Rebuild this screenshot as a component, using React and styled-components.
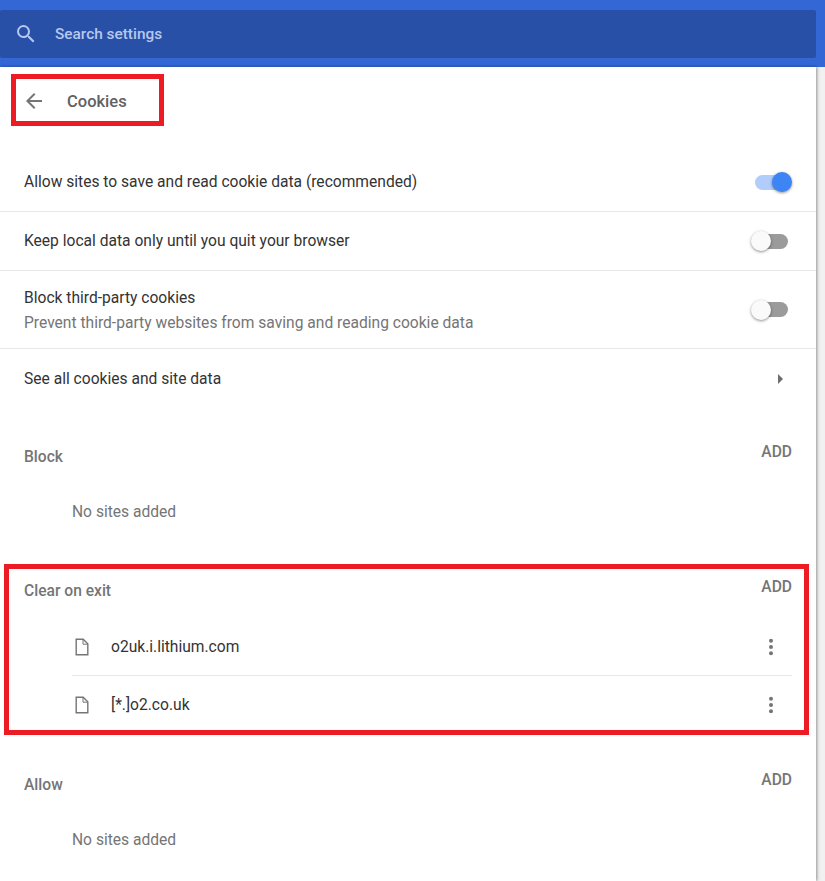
import React from 'react'
import styled, { createGlobalStyle } from 'styled-components'

const GlobalStyle = createGlobalStyle`
  html, body {
    margin: 0;
    padding: 0;
    background: #f1f1f1;
  }
  body {
    font-family: Roboto, "Liberation Sans", sans-serif;
    overflow: hidden;
  }
`

function SearchIcon() {
  return (
    <svg width="24" height="24" viewBox="0 0 24 24" fill="#b6c8ee">
      <path d="M15.5 14h-.79l-.28-.27A6.47 6.47 0 0 0 16 9.5 6.5 6.5 0 1 0 9.5 16c1.61 0 3.09-.59 4.23-1.57l.27.28v.79l5 4.99L20.49 19l-4.99-5zm-6 0C7.01 14 5 11.99 5 9.5S7.01 5 9.5 5 14 7.01 14 9.5 11.99 14 9.5 14z" />
    </svg>
  )
}

function BackIcon() {
  return (
    <svg width="24" height="24" viewBox="0 0 24 24" fill="#757575">
      <path d="M20 11H7.83l5.59-5.59L12 4l-8 8 8 8 1.41-1.41L7.83 13H20v-2z" />
    </svg>
  )
}

function FileIcon() {
  return (
    <svg width="14" height="18" viewBox="0 0 14 18" fill="none" stroke="#757575" strokeWidth="1.4">
      <path d="M1.2 1.2h7l4.6 4.6v11H1.2z" />
      <path d="M8 1.2v5h4.8" strokeWidth="1" />
    </svg>
  )
}

function MoreIcon() {
  return (
    <svg width="24" height="24" viewBox="0 0 24 24" fill="#757575">
      <circle cx="12" cy="5.8" r="2" />
      <circle cx="12" cy="12" r="2" />
      <circle cx="12" cy="18.2" r="2" />
    </svg>
  )
}

function Site({ name }) {
  return (
    <SiteRow>
      <FileSlot><FileIcon /></FileSlot>
      <SiteName>{name}</SiteName>
      <MoreSlot><MoreIcon /></MoreSlot>
    </SiteRow>
  )
}

export default function App() {
  return (
    <Page>
      <GlobalStyle />
      <Header>
        <SearchBox>
          <SearchIconSlot><SearchIcon /></SearchIconSlot>
          <SearchText>Search settings</SearchText>
        </SearchBox>
      </Header>
      <Card>
        <TitleRow>
          <BackSlot><BackIcon /></BackSlot>
          <Title>Cookies</Title>
        </TitleRow>

        <SettingRow $height={59}>
          <Label>Allow sites to save and read cookie data (recommended)</Label>
          <Toggle $on />
        </SettingRow>
        <SettingRow $height={59}>
          <Label>Keep local data only until you quit your browser</Label>
          <Toggle />
        </SettingRow>
        <SettingRow $height={78}>
          <LabelStack>
            <Label>Block third-party cookies</Label>
            <SubLabel>Prevent third-party websites from saving and reading cookie data</SubLabel>
          </LabelStack>
          <Toggle />
        </SettingRow>
        <SettingRow $height={59} $last>
          <Label>See all cookies and site data</Label>
          <Arrow />
        </SettingRow>

        <Section $top={34}>
          <SectionHead>
            <SectionTitle>Block</SectionTitle>
            <AddButton>ADD</AddButton>
          </SectionHead>
          <Empty>No sites added</Empty>
        </Section>

        <Section $top={36}>
          <SectionHead $height={40}>
            <SectionTitle $pad={4}>Clear on exit</SectionTitle>
            <AddButton>ADD</AddButton>
          </SectionHead>
          <SiteList>
            <Site name="o2uk.i.lithium.com" />
            <Site name="[*.]o2.co.uk" />
          </SiteList>
        </Section>

        <Section $top={35}>
          <SectionHead>
            <SectionTitle>Allow</SectionTitle>
            <AddButton>ADD</AddButton>
          </SectionHead>
          <Empty>No sites added</Empty>
        </Section>
      </Card>
      <TitleMark />
      <ClearMark />
    </Page>
  )
}

const Page = styled.div`
  position: relative;
  width: 825px;
  height: 881px;
  overflow: hidden;
  background: #f1f1f1;
`

const Header = styled.header`
  height: 67px;
  box-sizing: border-box;
  padding: 10px 9px 9px 0;
  background: #3367d6;
`

const SearchBox = styled.div`
  height: 48px;
  display: flex;
  align-items: center;
  background: #2850a7;
  border-radius: 2px;
`

const SearchIconSlot = styled.div`
  width: 24px;
  height: 24px;
  margin-left: 14px;
  margin-right: 17px;
`

const SearchText = styled.span`
  font-size: 15.4px;
  font-weight: 500;
  color: #b6c8ee;
`

const Card = styled.main`
  width: 816px;
  height: 814px;
  background: #fff;
  box-shadow: 1px 0 3px rgba(0, 0, 0, 0.4);
`

const TitleRow = styled.div`
  height: 86px;
  box-sizing: border-box;
  padding: 22px 0 0 22px;
  display: flex;
  align-items: flex-start;
`

const BackSlot = styled.div`
  width: 24px;
  height: 24px;
`

const Title = styled.h1`
  margin: 1px 0 0 21px;
  font-size: 16.5px;
  line-height: 24px;
  font-weight: 500;
  color: #616161;
`

const SettingRow = styled.div`
  height: ${p => p.$height}px;
  box-sizing: border-box;
  padding: 0 24px;
  display: flex;
  align-items: center;
  justify-content: space-between;
  border-bottom: ${p => (p.$last ? 'none' : '1px solid #e8e8e8')};
`

const LabelStack = styled.div`
  padding-top: 1px;
`

const Label = styled.div`
  font-size: 15.6px;
  line-height: 24px;
  color: #333;
`

const SubLabel = styled.div`
  margin-top: 1px;
  font-size: 15.6px;
  line-height: 24px;
  color: #757575;
`

const Toggle = styled.div`
  position: relative;
  flex: none;
  width: 33px;
  height: 15px;
  margin-right: 4px;
  border-radius: 8px;
  background: ${p => (p.$on ? '#b0cdfb' : '#9b9b9b')};

  &::after {
    content: '';
    position: absolute;
    top: -2.5px;
    left: ${p => (p.$on ? '17px' : '-4px')};
    width: 20px;
    height: 20px;
    border-radius: 50%;
    background: ${p => (p.$on ? '#3d84f5' : '#fafafa')};
    box-shadow: 0 1px 3px rgba(0, 0, 0, 0.45);
  }
`

const Arrow = styled.div`
  flex: none;
  width: 0;
  height: 0;
  margin-right: 9px;
  border-top: 5px solid transparent;
  border-bottom: 5px solid transparent;
  border-left: 5px solid #6e6e6e;
`

const Section = styled.section`
  margin-top: ${p => p.$top}px;
  padding: 0 24px;
`

const SectionHead = styled.div`
  height: ${p => p.$height || 41}px;
  display: flex;
  justify-content: space-between;
  align-items: flex-start;
`

const SectionTitle = styled.h2`
  margin: 0;
  padding-top: ${p => p.$pad ?? 5}px;
  font-size: 15.6px;
  line-height: 20px;
  font-weight: 500;
  color: #757575;
`

const AddButton = styled.span`
  font-size: 15.6px;
  line-height: 20px;
  font-weight: 500;
  color: #757575;
`

const Empty = styled.div`
  height: 58px;
  padding-left: 48px;
  font-size: 15.6px;
  line-height: 58px;
  color: #757575;
`

const SiteList = styled.div`
  margin-left: 48px;
`

const SiteRow = styled.div`
  height: 59px;
  box-sizing: border-box;
  display: flex;
  align-items: center;
  border-bottom: 1px solid #e8e8e8;

  &:first-child {
    padding-top: 2px;
  }

  &:last-child {
    padding-bottom: 1px;
    border-bottom: none;
  }
`

const FileSlot = styled.div`
  width: 14px;
  height: 18px;
  margin-left: 3px;
  margin-right: 22px;
`

const SiteName = styled.div`
  flex: 1;
  font-size: 15.6px;
  color: #333;
`

const MoreSlot = styled.div`
  width: 24px;
  height: 24px;
  margin-right: 9px;
`

const TitleMark = styled.div`
  position: absolute;
  left: 11px;
  top: 74px;
  width: 153px;
  height: 52px;
  box-sizing: border-box;
  border: 5px solid #ed1c24;
`

const ClearMark = styled.div`
  position: absolute;
  left: 4px;
  top: 564px;
  width: 805px;
  height: 171px;
  box-sizing: border-box;
  border: 5px solid #ed1c24;
`
